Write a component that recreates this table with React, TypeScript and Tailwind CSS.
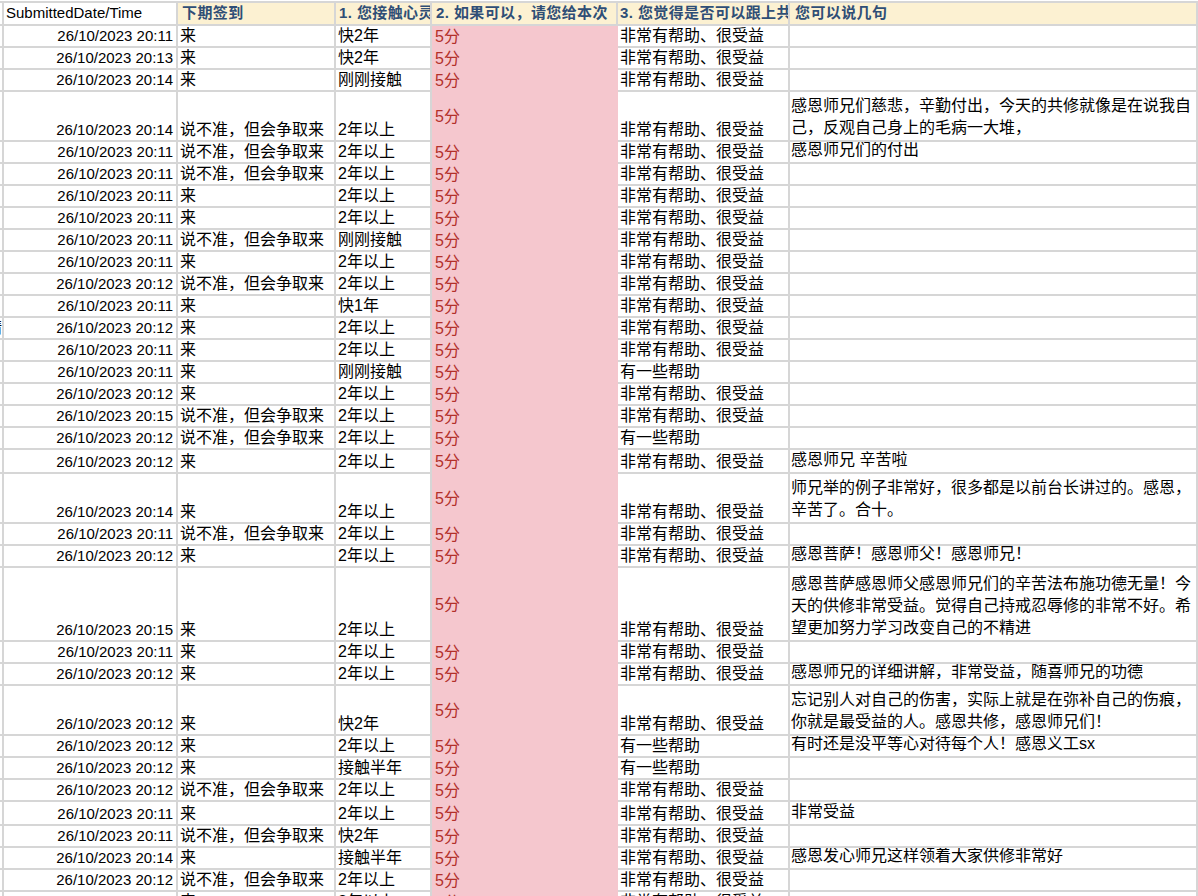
import clsx from "clsx";

type Row = {
  t: string;
  b: string;
  c: string;
  e: string;
  f?: string[];
  h?: "h-[22px]" | "h-[24px]" | "h-[50px]" | "h-[74px]";
  edge?: string;
};

const HELP = "非常有帮助、很受益";
const SOME = "有一些帮助";
const MAYBE = "说不准，但会争取来";

const rows: Row[] = [
  { t: "20:11", b: "来", c: "快2年", e: HELP },
  { t: "20:13", b: "来", c: "快2年", e: HELP },
  { t: "20:14", b: "来", c: "刚刚接触", e: HELP },
  {
    t: "20:14",
    b: MAYBE,
    c: "2年以上",
    e: HELP,
    h: "h-[50px]",
    f: ["感恩师兄们慈悲，辛勤付出，今天的共修就像是在说我自", "己，反观自己身上的毛病一大堆，"],
  },
  { t: "20:11", b: MAYBE, c: "2年以上", e: HELP, f: ["感恩师兄们的付出"] },
  { t: "20:11", b: MAYBE, c: "2年以上", e: HELP },
  { t: "20:11", b: "来", c: "2年以上", e: HELP },
  { t: "20:11", b: "来", c: "2年以上", e: HELP },
  { t: "20:11", b: MAYBE, c: "刚刚接触", e: HELP },
  { t: "20:11", b: "来", c: "2年以上", e: HELP },
  { t: "20:12", b: MAYBE, c: "2年以上", e: HELP },
  { t: "20:11", b: "来", c: "快1年", e: HELP },
  { t: "20:12", b: "来", c: "2年以上", e: HELP, edge: "精" },
  { t: "20:11", b: "来", c: "2年以上", e: HELP },
  { t: "20:11", b: "来", c: "刚刚接触", e: SOME },
  { t: "20:12", b: "来", c: "2年以上", e: HELP },
  { t: "20:15", b: MAYBE, c: "2年以上", e: HELP },
  { t: "20:12", b: MAYBE, c: "2年以上", e: SOME },
  { t: "20:12", b: "来", c: "2年以上", e: HELP, f: ["感恩师兄 辛苦啦"], h: "h-[24px]" },
  {
    t: "20:14",
    b: "来",
    c: "2年以上",
    e: HELP,
    h: "h-[50px]",
    f: ["师兄举的例子非常好，很多都是以前台长讲过的。感恩，", "辛苦了。合十。"],
  },
  { t: "20:11", b: MAYBE, c: "2年以上", e: HELP },
  { t: "20:12", b: "来", c: "2年以上", e: HELP, f: ["感恩菩萨！感恩师父！感恩师兄！"] },
  {
    t: "20:15",
    b: "来",
    c: "2年以上",
    e: HELP,
    h: "h-[74px]",
    f: [
      "感恩菩萨感恩师父感恩师兄们的辛苦法布施功德无量！今",
      "天的供修非常受益。觉得自己持戒忍辱修的非常不好。希",
      "望更加努力学习改变自己的不精进",
    ],
  },
  { t: "20:11", b: "来", c: "2年以上", e: HELP },
  { t: "20:12", b: "来", c: "2年以上", e: HELP, f: ["感恩师兄的详细讲解，非常受益，随喜师兄的功德"] },
  {
    t: "20:12",
    b: "来",
    c: "快2年",
    e: HELP,
    h: "h-[50px]",
    f: ["忘记别人对自己的伤害，实际上就是在弥补自己的伤痕，", "你就是最受益的人。感恩共修，感恩师兄们！"],
  },
  { t: "20:12", b: "来", c: "2年以上", e: SOME, f: ["有时还是没平等心对待每个人！感恩义工sx"] },
  { t: "20:12", b: "来", c: "接触半年", e: SOME },
  { t: "20:12", b: MAYBE, c: "2年以上", e: HELP },
  { t: "20:11", b: "来", c: "2年以上", e: HELP, f: ["非常受益"], h: "h-[24px]" },
  { t: "20:11", b: MAYBE, c: "快2年", e: HELP },
  { t: "20:14", b: "来", c: "接触半年", e: HELP, f: ["感恩发心师兄这样领着大家供修非常好"] },
  { t: "20:12", b: MAYBE, c: "2年以上", e: HELP },
  { t: "20:11", b: "来", c: "2年以上", e: HELP },
];

const line = "border-b-2 border-r-2 border-[#d6d6d6]";

function Header() {
  const head =
    "flex items-center overflow-hidden whitespace-nowrap bg-[#fcf1d2] text-[15px] font-bold tracking-[0.4px] text-[#2f4e76]";
  return (
    <div className="flex h-[23px]">
      <div className={clsx("w-[4px] shrink-0", line)} />
      <div className={clsx("flex w-[174px] shrink-0 items-center pl-[2px] text-[15px] text-black", line)}>
        SubmittedDate/Time
      </div>
      <div className={clsx(head, "w-[158px] shrink-0 pl-[4px]", line)}>下期签到</div>
      <div className={clsx(head, "w-[96px] shrink-0 pl-[3px]", line)}>1. 您接触心灵</div>
      <div className={clsx(head, "w-[186px] shrink-0 pl-[4px]", line)}>2. 如果可以，请您给本次</div>
      <div className={clsx(head, "w-[172px] shrink-0 pl-[2px]", line)}>3. 您觉得是否可以跟上共</div>
      <div className={clsx(head, "flex-1 pl-[5px]", line)}>您可以说几句</div>
    </div>
  );
}

function DataRow({ r }: { r: Row }) {
  const cell = "flex items-end overflow-hidden whitespace-nowrap leading-[20px]";
  return (
    <div className={clsx("flex shrink-0", r.h ?? "h-[22px]")}>
      <div className={clsx(cell, "w-[4px] shrink-0 justify-end", line)}>
        {r.edge && <span>{r.edge}</span>}
      </div>
      <div className={clsx(cell, "w-[174px] shrink-0 justify-end pr-[3px] text-[15px]", line)}>
        26/10/2023 {r.t}
      </div>
      <div className={clsx(cell, "w-[158px] shrink-0 pl-[2px]", line)}>{r.b}</div>
      <div className={clsx(cell, "w-[96px] shrink-0 pl-[2px]", line)}>{r.c}</div>
      <div className="flex w-[186px] shrink-0 items-center bg-[#f5c7ce] pl-[3px] text-[#b3302a]">5分</div>
      <div className={clsx(cell, "w-[172px] shrink-0 pl-[2px]", line)}>{r.e}</div>
      <div className={clsx("flex flex-1 items-end overflow-hidden pl-[1px] pb-[1px]", line)}>
        {r.f && (
          <div className="leading-[22px]">
            {r.f.map((l, i) => (
              <div key={i} className="whitespace-nowrap">
                {l}
              </div>
            ))}
          </div>
        )}
      </div>
    </div>
  );
}

export default function App() {
  return (
    <div className="h-[896px] w-[1198px] overflow-hidden bg-white pt-[1px] font-['Liberation_Sans','Noto_Sans_CJK_SC',sans-serif] text-[16px] text-black">
      <div className="border-t-2 border-[#d6d6d6]">
        <Header />
        {rows.map((r, i) => (
          <DataRow key={i} r={r} />
        ))}
      </div>
    </div>
  );
}
